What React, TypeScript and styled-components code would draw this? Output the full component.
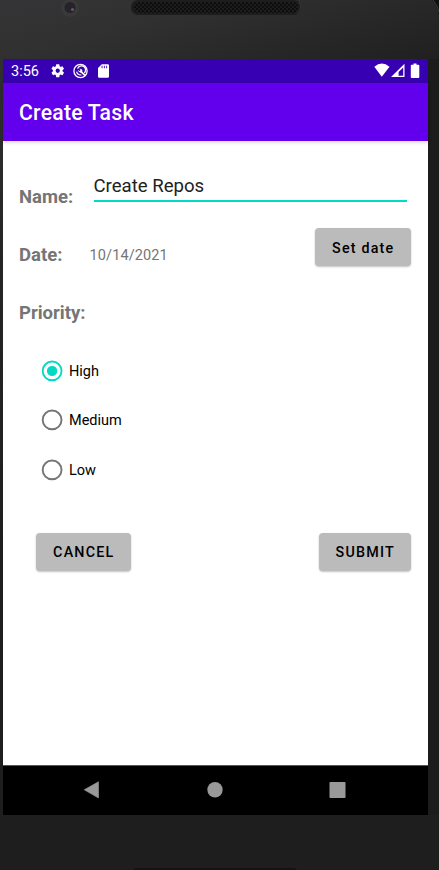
import React, { useState } from "react";
import styled, { createGlobalStyle } from "styled-components";

const GlobalStyle = createGlobalStyle`
  *, *::before, *::after { box-sizing: border-box; }
  body { margin: 0; background: #1e1e1e; font-family: Roboto, "Liberation Sans", sans-serif; }
  button, input { font-family: inherit; }
`;

const Phone = styled.div`
  width: 439px;
  height: 870px;
  overflow: hidden;
  display: flex;
  flex-direction: column;
  background: #1e1e1e;
`;

const Bezel = styled.div`
  height: 59px;
  flex: none;
  background: linear-gradient(165deg, #353537 0%, #303030 35%, #272727 70%, #202020 100%);
`;

const Chin = styled.div`
  flex: 1;
  background: #1e1e1f;
`;

const Body = styled.div`
  display: flex;
  height: 756px;
  flex: none;
  padding-left: 3px;
  background: linear-gradient(#303031 0, #252526 200px, #1e1e1e 500px) 0 0 / 3px 100% no-repeat, #1c1c1c;
`;

const Screen = styled.div`
  width: 425px;
  display: flex;
  flex-direction: column;
  background: #fff;
`;

const StatusBar = styled.div`
  height: 24px;
  flex: none;
  display: flex;
  align-items: center;
  justify-content: space-between;
  background: #3800b3;
  color: #fff;
  padding: 0 8px;
`;

const Clock = styled.span`
  font-size: 14.5px;
  line-height: 24px;
  width: 39px;
  padding-top: 1px;
`;

const StatusGroup = styled.div`
  display: flex;
  align-items: center;
`;

const StatusIcons = styled.svg`
  display: block;
`;

const AppBar = styled.header`
  height: 58px;
  flex: none;
  display: flex;
  align-items: center;
  padding: 2px 16px 0;
  background: #6200ed;
  box-shadow: 0 1px 4px rgba(0, 0, 0, 0.2);
`;

const Title = styled.h1`
  margin: 0;
  color: #fff;
  font-size: 21.2px;
  line-height: 24px;
  font-weight: 500;
  letter-spacing: 0.25px;
`;

const Form = styled.form`
  flex: 1;
  padding: 27px 17px 0 16px;
`;

const Row = styled.div<{ $height: number }>`
  display: flex;
  align-items: center;
  height: ${(p) => p.$height}px;
`;

const Label = styled.span<{ $width?: number }>`
  width: ${(p) => (p.$width ? `${p.$width}px` : "auto")};
  color: #757575;
  font-size: 18.5px;
  line-height: 22px;
  font-weight: 700;
`;

const NameInput = styled.input`
  width: 313px;
  height: 34px;
  margin-bottom: 24px;
  padding: 3px 0 0;
  border: 0;
  border-bottom: 2px solid #03dac5;
  outline: 0;
  background: none;
  color: #212121;
  font-size: 18.6px;
`;

const DateText = styled.span`
  flex: 1;
  color: #757575;
  font-size: 14.5px;
  letter-spacing: 0.12px;
`;

const GrayButton = styled.button<{ $width: number }>`
  width: ${(p) => p.$width}px;
  height: 38px;
  flex: none;
  padding: 1px 0 0 1px;
  border: 0;
  border-radius: 4px;
  background: #bbb;
  color: #000;
  font-size: 14.3px;
  font-weight: 500;
  letter-spacing: 1.2px;
  white-space: nowrap;
  box-shadow: 0 1px 2px rgba(0, 0, 0, 0.24);
`;

const DateRow = styled(Row)`
  ${GrayButton} {
    align-self: flex-start;
    margin-top: 2px;
  }
`;

const Options = styled.div`
  padding: 3.8px 0 0 22px;
`;

const Option = styled.div`
  display: flex;
  align-items: center;
  gap: 6px;
  height: 49.6px;
  color: #000;
  font-size: 14.5px;
`;

const OptionText = styled.span`
  padding-top: 1.4px;
`;

const Actions = styled.div`
  display: flex;
  justify-content: space-between;
  padding: 38.4px 0 0 16.5px;
`;

const NavBar = styled.nav`
  height: 50px;
  flex: none;
  display: flex;
  justify-content: center;
  background: #000;
  border-top: 1px solid #545858;
`;

const DeviceTop = () => (
  <svg width="439" height="59" aria-hidden="true">
    <defs>
      <pattern id="mesh" width="4" height="4" patternUnits="userSpaceOnUse">
        <circle cx="1" cy="1" r="0.9" fill="#050505" />
        <circle cx="3" cy="3" r="0.9" fill="#050505" />
      </pattern>
    </defs>
    <circle cx="70" cy="8" r="9" fill="#39393a" />
    <circle cx="70" cy="7.5" r="5.5" fill="#242329" />
    <circle cx="72.5" cy="9.5" r="1.6" fill="#71535a" />
    <rect x="131" y="0" width="170" height="15" rx="7" fill="#1d1d1d" />
    <rect x="134" y="2" width="164" height="11" rx="5" fill="url(#mesh)" />
    <path d="M299 2Q303 8 297 14" fill="none" stroke="#3a3a3a" strokeWidth="0.8" />
    <path d="M432 0Q438 7 439 16V0Z" fill="#101010" />
    <path d="M433 0Q438 6 439 12" fill="none" stroke="#3c3c3c" />
  </svg>
);

const Notifications = () => (
  <StatusIcons width="62" height="24" fill="#fff" aria-hidden="true">
    <g transform="translate(-.3 3.7) scale(.67)">
      <path d="M19.14 12.94c.04-.3.06-.61.06-.94s-.02-.64-.07-.94l2.03-1.58a.49.49 0 0 0 .12-.61l-1.92-3.32a.49.49 0 0 0-.59-.22l-2.39.96a7 7 0 0 0-1.62-.94L14.4 2.81a.48.48 0 0 0-.48-.41h-3.84a.47.47 0 0 0-.47.41l-.36 2.54c-.59.24-1.13.57-1.62.94l-2.39-.96a.48.48 0 0 0-.59.22L2.74 8.87a.47.47 0 0 0 .12.61l2.03 1.58a7 7 0 0 0 0 1.88l-2.03 1.58a.49.49 0 0 0-.12.61l1.92 3.32c.12.22.37.29.59.22l2.39-.96c.5.38 1.03.7 1.62.94l.36 2.54c.05.24.24.41.48.41h3.84c.24 0 .44-.17.47-.41l.36-2.54a7 7 0 0 0 1.62-.94l2.39.96c.22.08.47 0 .59-.22l1.92-3.32a.47.47 0 0 0-.12-.61zM12 15.2a3.2 3.2 0 1 1 0-6.4 3.2 3.2 0 0 1 0 6.4Z" />
    </g>
    <g fill="none" stroke="#fff">
      <circle cx="30.5" cy="12" r="6.6" strokeWidth="1.3" />
      <path d="M27.6 9.6A4.1 4.1 0 1 1 34.2 14" strokeWidth="1.3" />
      <path d="M30.2 11.8 35.2 16.6" strokeWidth="1.6" />
      <path d="M26.6 12.6A4 4 0 0 0 31.4 15.9" strokeWidth="1.2" />
    </g>
    <path d="M27.8 11.6 29.2 13 30.9 13.8 32.4 12.6A2.4 2.4 0 0 0 29.4 9.8L30.7 11.1 29.4 12.3 28.1 11.1A2.2 2.2 0 0 0 27.8 11.6Z" />
    <path
      fillRule="evenodd"
      d="M51.8 5.2H57.7a1.3 1.3 0 0 1 1.3 1.3V17.5a1.3 1.3 0 0 1-1.3 1.3H49.3A1.3 1.3 0 0 1 48 17.5V9ZM51.6 6.8V9.2H52.5V6.8ZM53.9 6.8V9.2H54.8V6.8ZM56.2 6.8V9.2H57.1V6.8Z"
    />
  </StatusIcons>
);

const SystemIcons = () => (
  <StatusIcons width="48" height="24" fill="#fff" aria-hidden="true">
    <path d="M2.3 7.7Q9.8 1.5 17.5 7.7L9.8 17.8Z" />
    <path fillRule="evenodd" d="M32.5 4.8V18H19ZM31.2 8.4 26.6 13V16.8H31.2Z" />
    <path d="M41.5 4.6h3v1.2h1.9q.9 0 .9.9v11.3q0 .9-.9.9h-6.7q-.9 0-.9-.9v-11.3q0-.9.9-.9h1.8Z" />
  </StatusIcons>
);

const RadioMark = ({ checked }: { checked: boolean }) => (
  <svg width="22" height="22" aria-hidden="true">
    <circle cx="11.1" cy="10.9" r="9.4" fill="none" stroke={checked ? "#03dac5" : "#757575"} strokeWidth="1.9" />
    {checked && <circle cx="11.1" cy="10.9" r="5.2" fill="#03dac5" />}
  </svg>
);

const priorities = ["High", "Medium", "Low"];

export default function App() {
  const [name, setName] = useState("Create Repos");
  const [priority, setPriority] = useState("High");

  return (
    <>
      <GlobalStyle />
      <Phone>
        <Bezel>
          <DeviceTop />
        </Bezel>
        <Body>
          <Screen>
            <StatusBar>
              <StatusGroup>
                <Clock>3:56</Clock>
                <Notifications />
              </StatusGroup>
              <SystemIcons />
            </StatusBar>
            <AppBar>
              <Title>Create Task</Title>
            </AppBar>
            <Form onSubmit={(e) => e.preventDefault()}>
              <Row $height={58}>
                <Label $width={74.5}>Name:</Label>
                <NameInput aria-label="Name" value={name} onChange={(e) => setName(e.target.value)} />
              </Row>
              <DateRow $height={58}>
                <Label $width={70.5}>Date:</Label>
                <DateText>10/14/2021</DateText>
                <GrayButton type="button" $width={96.5}>Set date</GrayButton>
              </DateRow>
              <Row $height={58}>
                <Label>Priority:</Label>
              </Row>
              <Options role="radiogroup">
                {priorities.map((p) => (
                  <Option key={p} role="radio" aria-checked={p === priority} onClick={() => setPriority(p)}>
                    <RadioMark checked={p === priority} />
                    <OptionText>{p}</OptionText>
                  </Option>
                ))}
              </Options>
              <Actions>
                <GrayButton type="button" $width={95.5}>CANCEL</GrayButton>
                <GrayButton type="submit" $width={92.5}>SUBMIT</GrayButton>
              </Actions>
            </Form>
            <NavBar>
              <svg width="425" height="49" fill="#999" aria-hidden="true">
                <path d="M81.2 23.8 95.5 15.7V32Z" stroke="#999" strokeWidth=".6" strokeLinejoin="round" />
                <circle cx="212" cy="23.8" r="7.7" />
                <rect x="326.5" y="16" width="16" height="16" rx=".8" />
              </svg>
            </NavBar>
          </Screen>
        </Body>
        <Chin>
          <svg width="439" height="55" aria-hidden="true">
            <path d="M133 55Q134 53 138 53H292Q296 53 297 55Z" fill="#131313" />
          </svg>
        </Chin>
      </Phone>
    </>
  );
}
